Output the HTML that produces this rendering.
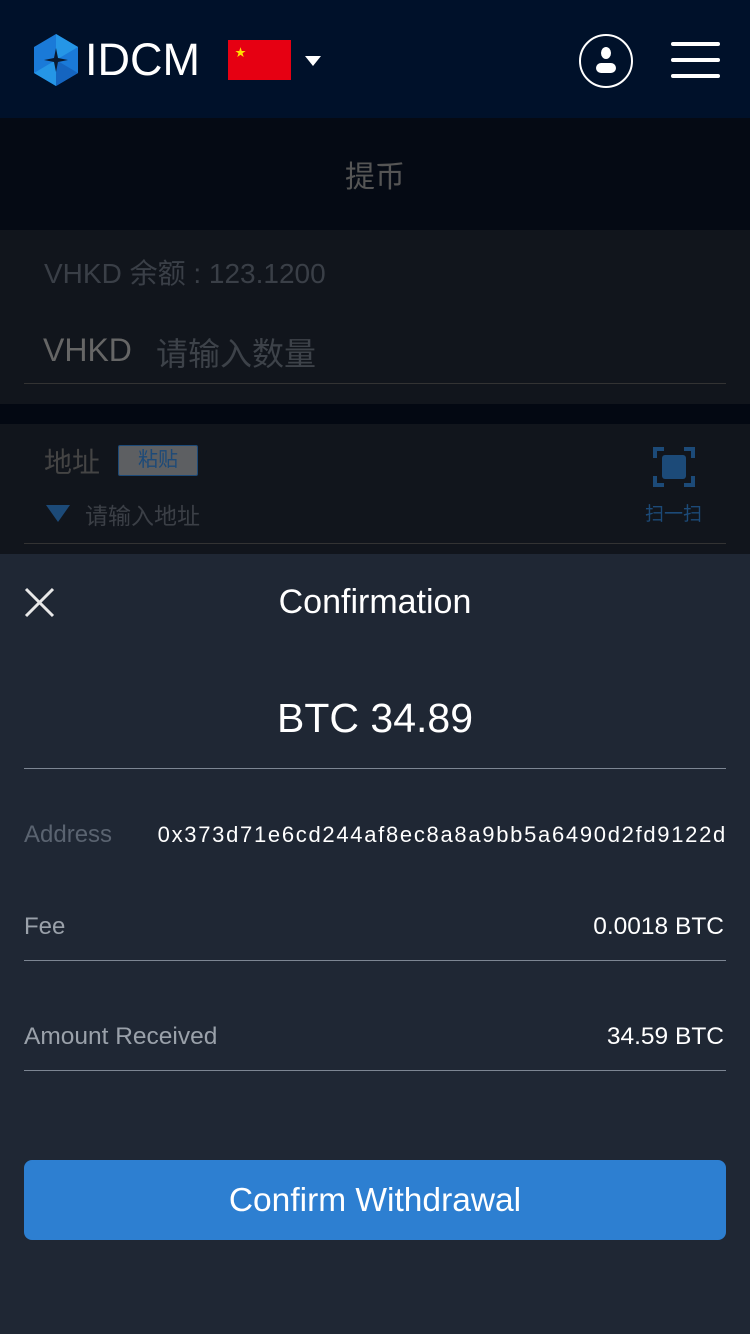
<!DOCTYPE html>
<html><head><meta charset="utf-8"><style>
*{margin:0;padding:0;box-sizing:border-box}
body{width:750px;height:1334px;background:#1f2734;font-family:"Liberation Sans","Noto Sans CJK SC",sans-serif;position:relative;overflow:hidden}
.abs{position:absolute}
</style></head><body>
<div class="abs" style="left:0;top:0;width:750px;height:118px;background:#00112a"></div>
<svg class="abs" style="left:33px;top:34px" width="46" height="52" viewBox="0 0 46 52">
<polygon points="23,0 45,13 45,39 23,52 1,39 1,13" fill="#1a7ad8"/>
<polygon points="23,0 45,13 23,26" fill="#2596e6"/><polygon points="1,39 23,52 23,26" fill="#2596e6"/>
<polygon points="23,26 45,39 23,52" fill="#1565c0"/>
<path d="M23 14 L25 24 L35 26 L25 28 L23 38 L21 28 L11 26 L21 24Z" fill="#0a1a30"/>
</svg>
<div class="abs" style="left:85px;top:35px;color:#fff;font-size:45px;line-height:50px">IDCM</div>
<div class="abs" style="left:228px;top:40px;width:63px;height:40px;background:#e60012"></div>
<div class="abs" style="left:235px;top:44px;color:#ffde00;font-size:11px">★</div>
<div class="abs" style="left:305px;top:56px;width:0;height:0;border-left:8px solid transparent;border-right:8px solid transparent;border-top:10px solid #fff"></div>
<svg class="abs" style="left:578px;top:33px" width="56" height="56" viewBox="0 0 56 56"><circle cx="28" cy="28" r="26" fill="none" stroke="#fff" stroke-width="2"/><ellipse cx="28" cy="20" rx="5" ry="6" fill="#fff"/><rect x="18" y="30" width="20" height="10" rx="5" fill="#fff"/></svg>
<div class="abs" style="left:671px;top:42px;width:49px;height:4px;background:#fff;border-radius:2px"></div>
<div class="abs" style="left:671px;top:58px;width:49px;height:4px;background:#fff;border-radius:2px"></div>
<div class="abs" style="left:671px;top:74px;width:49px;height:4px;background:#fff;border-radius:2px"></div>
<div class="abs" style="left:0;top:118px;width:750px;height:112px;background:#050a14"></div>
<div class="abs" style="left:0;top:152px;width:750px;text-align:center;color:#555;font-size:30px">提币</div>
<div class="abs" style="left:0;top:230px;width:750px;height:174px;background:#11151c"></div>
<div class="abs" style="left:44px;top:252px;color:#3a3f47;font-size:28px">VHKD 余额 : 123.1200</div>
<div class="abs" style="left:43px;top:332px;color:#666;font-size:32px">VHKD</div>
<div class="abs" style="left:156px;top:329px;color:#3d4249;font-size:32px">请输入数量</div>
<div class="abs" style="left:24px;top:383px;width:702px;height:1px;background:#333"></div>
<div class="abs" style="left:0;top:404px;width:750px;height:20px;background:#030812"></div>
<div class="abs" style="left:0;top:424px;width:750px;height:130px;background:#11151c"></div>
<div class="abs" style="left:44px;top:441px;color:#444;font-size:28px">地址</div>
<div class="abs" style="left:118px;top:445px;width:80px;height:31px;background:#5d5f62;border:1px solid #1d4a78;border-radius:2px;color:#1d4a78;font-size:20px;text-align:center;line-height:29px">粘贴</div>
<div class="abs" style="left:46px;top:505px;width:0;height:0;border-left:12px solid transparent;border-right:12px solid transparent;border-top:17px solid #1c4a78"></div>
<div class="abs" style="left:85px;top:497px;color:#3b3f46;font-size:23px">请输入地址</div>
<svg class="abs" style="left:653px;top:446px" width="42" height="42" viewBox="0 0 42 42" fill="none" stroke="#1c4a78" stroke-width="4"><path d="M2 12V3H11M31 3H40V12M40 30V39H31M11 39H2V30"/><rect x="9" y="9" width="24" height="24" rx="3" fill="#1c4a78" stroke="none"/></svg>
<div class="abs" style="left:645px;top:499px;color:#1c4a78;font-size:19px">扫一扫</div>
<div class="abs" style="left:24px;top:543px;width:702px;height:1px;background:#333"></div>
<svg class="abs" style="left:24px;top:587px" width="31" height="31" viewBox="0 0 31 31" stroke="#e8e8e8" stroke-width="3"><path d="M2 2L29 29M29 2L2 29"/></svg>
<div class="abs" style="left:0;top:583px;width:750px;text-align:center;color:#fff;font-size:34px">Confirmation</div>
<div class="abs" style="left:0;top:695px;width:750px;text-align:center;color:#fff;font-size:41px">BTC 34.89</div>
<div class="abs" style="left:24px;top:768px;width:702px;height:1px;background:#7d8693"></div>
<div class="abs" style="left:24px;top:821px;color:#5a6370;font-size:24px">Address</div>
<div class="abs" style="right:25px;top:822px;color:#fff;font-size:22px;letter-spacing:1.7px;margin-right:-2px">0x373d71e6cd244af8ec8a8a9bb5a6490d2fd9122d</div>
<div class="abs" style="left:24px;top:913px;color:#9aa1aa;font-size:24px">Fee</div>
<div class="abs" style="right:26px;top:913px;color:#fff;font-size:24.5px">0.0018 BTC</div>
<div class="abs" style="left:24px;top:960px;width:702px;height:1px;background:#7d8693"></div>
<div class="abs" style="left:24px;top:1023px;color:#9aa1aa;font-size:24.5px">Amount Received</div>
<div class="abs" style="right:26px;top:1023px;color:#fff;font-size:24.5px">34.59 BTC</div>
<div class="abs" style="left:24px;top:1070px;width:702px;height:1px;background:#7d8693"></div>
<div class="abs" style="left:24px;top:1160px;width:702px;height:80px;background:#2d7fd1;border-radius:8px;color:#fff;font-size:33.5px;text-align:center;line-height:82px">Confirm Withdrawal</div>
</body></html>
